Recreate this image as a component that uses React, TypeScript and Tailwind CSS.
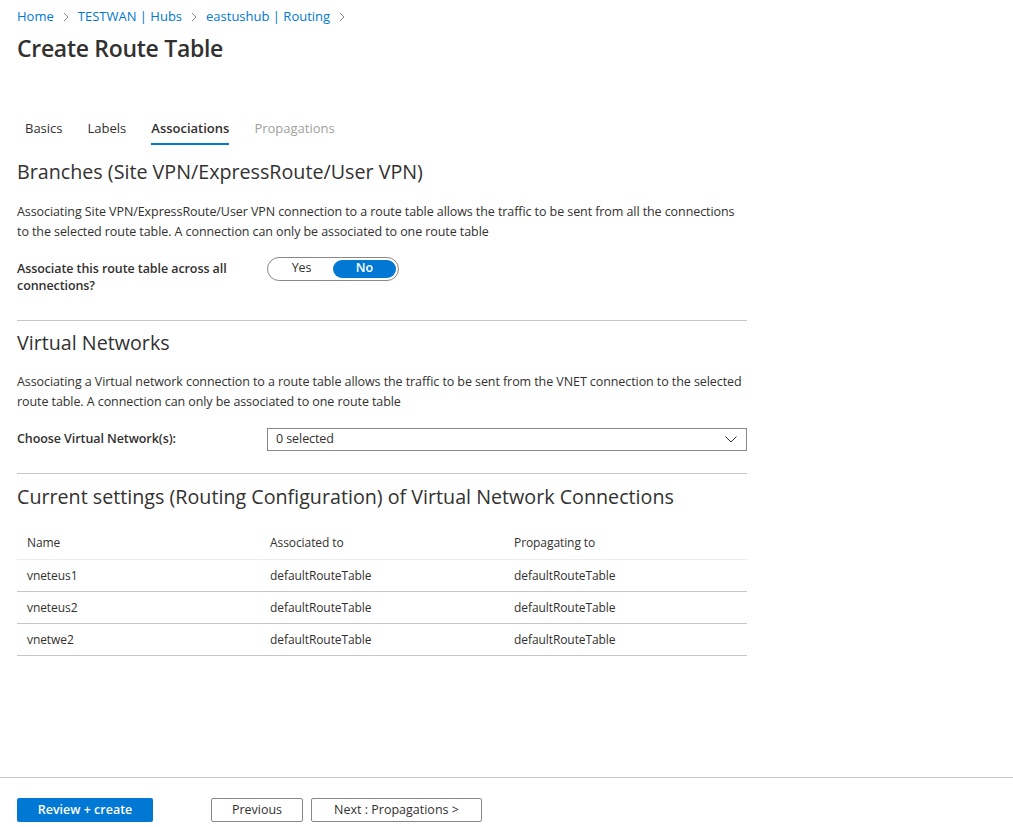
const rows = [
  { name: "vneteus1", assoc: "defaultRouteTable", prop: "defaultRouteTable" },
  { name: "vneteus2", assoc: "defaultRouteTable", prop: "defaultRouteTable" },
  { name: "vnetwe2", assoc: "defaultRouteTable", prop: "defaultRouteTable" },
];

function Chevron() {
  return (
    <svg width="12" height="12" viewBox="0 0 12 12" className="mx-[6px]">
      <path d="M4 2l4 4-4 4" fill="none" stroke="#8a8886" strokeWidth="1" />
    </svg>
  );
}

export default function App() {
  return (
    <div className="flex flex-col h-[827px] w-[1013px] bg-white text-[#323130] font-['Open_Sans',sans-serif]">
      <div className="flex-1 px-[17px]">
        <nav className="flex items-center h-[18px] mt-[8px] text-[13px] text-[#0078d4]">
          <span>Home</span>
          <Chevron />
          <span>TESTWAN | Hubs</span>
          <Chevron />
          <span>eastushub | Routing</span>
          <Chevron />
        </nav>
        <h1 className="text-[23px] leading-[30px] mt-[7px] font-semibold tracking-[-0.3px]">Create Route Table</h1>

        <div className="flex gap-[25px] mt-[56px] pl-[8px] text-[13px]">
          <div className="pb-[6px]">Basics</div>
          <div className="pb-[6px]">Labels</div>
          <div className="pb-[4px] font-semibold border-b-2 border-[#0078d4]">Associations</div>
          <div className="pb-[6px] text-[#a19f9d]">Propagations</div>
        </div>

        <div className="w-[730px] tracking-[-0.08px]">
          <h2 className="text-[19.7px] leading-[26px] mt-[14px] tracking-normal">Branches (Site VPN/ExpressRoute/User VPN)</h2>
          <p className="text-[12.5px] leading-[20px] mt-[17px]">
            Associating Site VPN/ExpressRoute/User VPN connection to a route table allows the traffic to be sent from all the connections to the selected route table. A connection can only be associated to one route table
          </p>
          <div className="flex items-start mt-[15px]">
            <div className="w-[250px] pt-[3px] text-[12.5px] leading-[17px] font-semibold">
              Associate this route table across all connections?
            </div>
            <div className="flex items-center w-[132px] h-[24px] rounded-full border border-[#8a8886] p-[2px] text-[12.5px]">
              <div className="flex-1 text-center">Yes</div>
              <div className="w-[63px] h-[18px] rounded-full bg-[#0078d4] text-white font-semibold flex items-center justify-center">No</div>
            </div>
          </div>

          <div className="border-t border-[#c8c6c4] mt-[26px]" />

          <h2 className="text-[19.7px] leading-[26px] mt-[9px] tracking-normal">Virtual Networks</h2>
          <p className="text-[12.5px] leading-[20px] mt-[16px]">
            Associating a Virtual network connection to a route table allows the traffic to be sent from the VNET connection to the selected route table. A connection can only be associated to one route table
          </p>
          <div className="flex items-center mt-[16px]">
            <div className="w-[250px] text-[12.5px] font-semibold">Choose Virtual Network(s):</div>
            <div className="flex-1 flex items-center justify-between h-[23px] border border-[#8a8886] pl-[8px] pr-[8px] text-[12.5px]">
              <span>0 selected</span>
              <svg width="14" height="14" viewBox="0 0 14 14">
                <path d="M1.5 4.5l5.5 5.5 5.5-5.5" fill="none" stroke="#323130" strokeWidth="1" />
              </svg>
            </div>
          </div>

          <div className="border-t border-[#c8c6c4] mt-[22px]" />

          <h2 className="text-[19.7px] leading-[26px] mt-[10px] tracking-normal">Current settings (Routing Configuration) of Virtual Network Connections</h2>

          <table className="w-full mt-[17px] text-[12px] border-collapse">
            <thead>
              <tr className="h-[33px] border-b border-[#edebe9]">
                <th className="text-left font-medium pl-[10px] w-[253px]">Name</th>
                <th className="text-left font-medium w-[244px]">Associated to</th>
                <th className="text-left font-medium">Propagating to</th>
              </tr>
            </thead>
            <tbody>
              {rows.map((r) => (
                <tr key={r.name} className="h-[32px] border-b border-[#c8c6c4]">
                  <td className="pl-[10px]">{r.name}</td>
                  <td>{r.assoc}</td>
                  <td>{r.prop}</td>
                </tr>
              ))}
            </tbody>
          </table>
        </div>
      </div>

      <div className="border-t border-[#c8c6c4] h-[50px] flex items-start px-[17px] pt-[20px] text-[12.5px]">
        <button className="w-[136px] h-[24px] bg-[#0078d4] text-white rounded-[2px] font-semibold">Review + create</button>
        <button className="w-[92px] h-[24px] ml-[58px] border border-[#8a8886] rounded-[2px] font-medium">Previous</button>
        <button className="w-[171px] h-[24px] ml-[8px] border border-[#8a8886] rounded-[2px] font-medium">Next : Propagations &gt;</button>
      </div>
    </div>
  );
}
